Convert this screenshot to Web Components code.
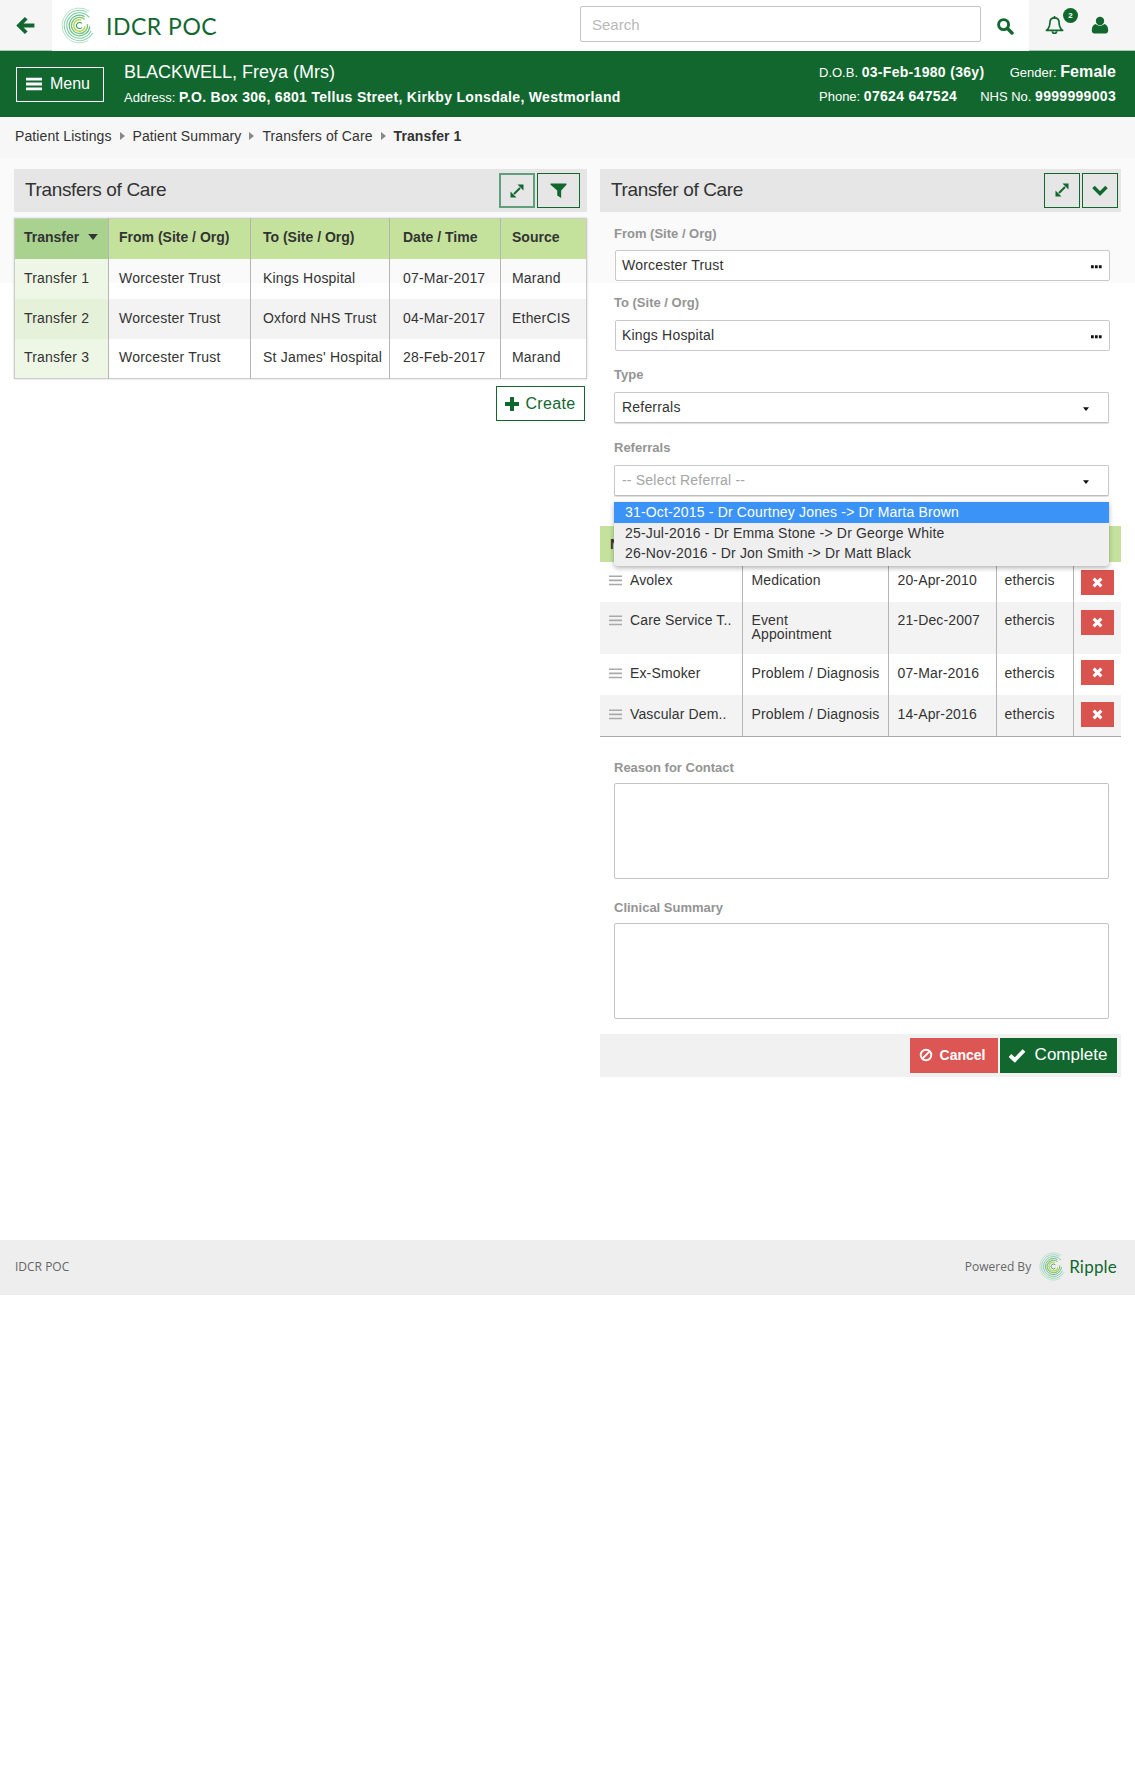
<!DOCTYPE html>
<html>
<head>
<meta charset="utf-8">
<title>IDCR POC</title>
<style>
  html, body { margin: 0; padding: 0; background: #fff; }
  body { font-family: "Liberation Sans", Arial, sans-serif; color: #333; font-size: 14px; }
</style>
</head>
<body>
<app-header></app-header>
<patient-banner></patient-banner>
<bread-crumbs></bread-crumbs>
<main-area>
  <div slot="left">
    <panel-heading>
      Transfers of Care
      <icon-btn slot="actions" icon="expand" w="36" focused></icon-btn>
      <icon-btn slot="actions" icon="filter" w="43"></icon-btn>
    </panel-heading>
    <transfers-table></transfers-table>
    <create-bar></create-bar>
  </div>
  <div slot="right">
    <panel-heading narrow>
      Transfer of Care
      <icon-btn slot="actions" icon="expand" w="36"></icon-btn>
      <icon-btn slot="actions" icon="chevron" w="36"></icon-btn>
    </panel-heading>
    <form-field label="From (Site / Org)" style="margin-top:14px" gap="8"><lookup-box value="Worcester Trust"></lookup-box></form-field>
    <form-field label="To (Site / Org)" style="margin-top:14px" gap="9"><lookup-box value="Kings Hospital"></lookup-box></form-field>
    <form-field label="Type" style="margin-top:16px" gap="9" flush><select-box value="Referrals"></select-box></form-field>
    <form-field label="Referrals" style="margin-top:17px" gap="9" flush>
      <select-box value="-- Select Referral --" placeholder></select-box>
      <referral-menu></referral-menu>
    </form-field>
    <items-table style="margin-top:30px"></items-table>
    <form-field label="Reason for Contact" style="margin-top:23px" gap="7" flush><text-box h="96"></text-box></form-field>
    <form-field label="Clinical Summary" style="margin-top:21px" gap="7" flush><text-box h="96"></text-box></form-field>
    <action-bar></action-bar>
  </div>
</main-area>
<app-footer></app-footer>

<script>
const ICONS = {
  back: '<svg viewBox="0 0 20 20" width="21" height="21"><path d="M9.400 1.800 12 4.400 8.200 8.100H18.500v3.800H8.200L12 15.600l-2.600 2.600L1.200 10z" fill="currentColor"/></svg>',
  search: '<svg viewBox="0 0 18 18" width="18" height="18"><circle cx="7.600" cy="7.600" r="5" fill="none" stroke="currentColor" stroke-width="2.900"/><path d="M11.400 11.400 16 16" stroke="currentColor" stroke-width="3.400" stroke-linecap="round"/></svg>',
  bell: '<svg viewBox="0 0 20 20" width="21" height="21"><path d="M10 2.800c-2.900 0-4.400 2.100-4.400 4.800 0 3.800-1.400 5.500-3.300 7.100h15.400c-1.900-1.600-3.300-3.300-3.300-7.100 0-2.700-1.500-4.800-4.400-4.800z" fill="none" stroke="currentColor" stroke-width="1.600" stroke-linejoin="round"/><path d="M10 1v2M8 15.400a2 2 0 0 0 4 0" fill="none" stroke="currentColor" stroke-width="1.600"/></svg>',
  user: '<svg viewBox="0 0 18 18" width="18" height="18"><circle cx="9" cy="5" r="4.200" fill="currentColor"/><path d="M.8 14.500c0-3.800 1.500-6 3.800-6.500C6 9.200 7.400 9.800 9 9.800s3-.6 4.400-1.800c2.300.5 3.800 2.700 3.800 6.500 0 1.900-1.100 3-2.800 3H3.600c-1.700 0-2.800-1.100-2.800-3z" fill="currentColor"/></svg>',
  bars: '<svg viewBox="0 0 16 14" width="16" height="14"><path d="M0 .8h16v2.800H0zM0 5.600h16v2.800H0zM0 10.400h16v2.800H0z" fill="currentColor"/></svg>',
  expand: '<svg viewBox="0 0 16 16" width="16" height="16"><path d="M8.500 1.500h6v6zM1.500 8.500v6h6z" fill="currentColor"/><path d="M11 5 5 11" stroke="currentColor" stroke-width="2"/></svg>',
  filter: '<svg viewBox="0 0 16 16" width="17" height="17"><path d="M.5 1.500h15v1.200L10.500 8V15L6.800 12.800V8L.5 2.700z" fill="currentColor"/></svg>',
  chevron: '<svg viewBox="0 0 18 18" width="18" height="18"><path d="M2.500 6 9 12.500 15.500 6" fill="none" stroke="currentColor" stroke-width="3.400"/></svg>',
  plus: '<svg viewBox="0 0 14 14" width="14" height="14"><path d="M5 0h4v5h5v4H9v5H5V9H0V5h5z" fill="currentColor"/></svg>',
  times: '<svg viewBox="0 0 12 12" width="11" height="11"><path d="M1.800 1.800l8.400 8.400M10.200 1.800l-8.400 8.400" stroke="currentColor" stroke-width="3.400"/></svg>',
  ban: '<svg viewBox="0 0 14 14" width="14" height="14"><circle cx="7" cy="7" r="5.300" fill="none" stroke="currentColor" stroke-width="1.900"/><path d="M3.400 10.600 10.600 3.400" stroke="currentColor" stroke-width="1.900"/></svg>',
  check: '<svg viewBox="0 0 18 16" width="18" height="16"><path d="M2 8.500 6.800 13 16 3.500" fill="none" stroke="currentColor" stroke-width="3.800"/></svg>',
  dots: '<svg viewBox="0 0 12 4" width="11" height="4"><path d="M0 0h3v3.400H0zM4.300 0h3v3.400h-3zM8.600 0h3v3.400h-3z" fill="#111"/></svg>',
  caret: '<svg viewBox="0 0 8 5" width="6" height="4"><path d="M0 0h8L4 5z" fill="currentColor"/></svg>',
  handle: '<svg viewBox="0 0 14 11" width="13" height="11"><path d="M0 0h14v1.700H0zM0 4.500h14v1.700H0zM0 9h14v1.700H0z" fill="#a9a9a9"/></svg>'
};

// ring from angle a to angle b (degrees, clockwise from east) around the logo centre
function ring(r, a, b, color, w) {
  const p = d => [18 + r * Math.cos(d * Math.PI / 180), 18 + r * Math.sin(d * Math.PI / 180)].map(n => n.toFixed(2)).join(' ');
  const large = (b - a) > 180 ? 1 : 0;
  return `<path d="M${p(a)}A${r} ${r} 0 ${large} 1 ${p(b)}" stroke="${color}" stroke-width="${w}"/>`;
}

class RippleLogo extends HTMLElement {
  connectedCallback() {
    const s = this.getAttribute('size') || 36;
    this.attachShadow({mode: 'open'}).innerHTML = `
      <style>:host { display: inline-flex; width: ${s}px; height: ${s}px; }</style>
      <svg viewBox="0 0 36 36" width="${s}" height="${s}" fill="none">
        ${ring(17, 60, 305, '#a5dcc0', .8)}
        ${ring(14.8, 30, 300, '#8fd3b0', 1)}
        ${ring(12.4, 25, 320, '#7cc9a0', 1.100)}
        ${ring(10, 5, 300, '#62bd8c', 1.200)}
        ${ring(7.800, -10, 310, '#7cc472', 1.300)}
        ${ring(5.600, 10, 290, '#b3d54d', 1.400)}
        ${ring(3, 40, 320, '#2f9a5c', 1)}
      </svg>`;
  }
}
customElements.define('ripple-logo', RippleLogo);

class AppHeader extends HTMLElement {
  connectedCallback() {
    this.attachShadow({mode: 'open'}).innerHTML = `
      <style>
        :host { display: flex; height: 51px; align-items: stretch; background: #fff; color: #12672f; font-family: "Liberation Sans", Arial, sans-serif; }
        .back { width: 52px; background: #f5f5f5; border-bottom: 1px solid #a9c9b5; box-sizing: border-box; display: flex; align-items: center; justify-content: center; padding-right: 1px; }
        .brand { display: flex; align-items: center; margin-left: 9px; gap: 8px; flex: 1; }
        .name { font: 400 23px Lato, "Liberation Sans", sans-serif; letter-spacing: .5px; }
        .search { width: 401px; height: 36px; margin-top: 6px; box-sizing: border-box; border: 1px solid #c4c4c4; border-radius: 2px; padding: 0 11px; display: flex; align-items: center; color: #b9b9b9; font-size: 15px; }
        .find { width: 48px; display: flex; align-items: center; justify-content: center; padding-top: 1px; box-sizing: border-box; }
        .tools { width: 106px; background: #f5f5f5; border-bottom: 1px solid #a9c9b5; box-sizing: border-box; display: flex; align-items: center; position: relative; }
        .bell { margin-left: 15px; display: flex; }
        .user { margin-left: 26px; display: flex; }
        .badge { position: absolute; left: 34px; top: 8px; width: 15px; height: 15px; border-radius: 50%; background: #12672f; color: #fff; font-size: 8px; font-weight: 700; text-align: center; line-height: 15px; }
      </style>
      <div class="back">${ICONS.back}</div>
      <div class="brand"><ripple-logo size="37"></ripple-logo><span class="name">IDCR POC</span></div>
      <div class="search">Search</div>
      <div class="find">${ICONS.search}</div>
      <div class="tools"><span class="bell">${ICONS.bell}</span><span class="badge">2</span><span class="user">${ICONS.user}</span></div>`;
  }
}
customElements.define('app-header', AppHeader);

class PatientBanner extends HTMLElement {
  connectedCallback() {
    this.attachShadow({mode: 'open'}).innerHTML = `
      <style>
        :host { display: flex; height: 66px; background: #12672f; color: #fff; align-items: center; padding: 0 19px 0 16px; box-sizing: border-box; font-size: 13px; }
        .menu { width: 88px; height: 35px; box-sizing: border-box; border: 1px solid #fff; display: flex; align-items: center; justify-content: center; gap: 8px; font-size: 16px; padding-right: 4px; }
        .who { margin-left: 20px; flex: 1; display: flex; flex-direction: column; gap: 6px; padding-top: 1px; }
        .name { font-size: 18px; line-height: 20px; }
        .line { line-height: 18px; }
        b { font-size: 14px; font-weight: 700; letter-spacing: .31px; }
        .meta { width: 297px; display: flex; flex-direction: column; gap: 5px; }
        .row { display: flex; justify-content: space-between; white-space: nowrap; }
        .g { font-size: 16px; letter-spacing: .1px; }
      </style>
      <div class="menu">${ICONS.bars}<span>Menu</span></div>
      <div class="who">
        <div class="name">BLACKWELL, Freya (Mrs)</div>
        <div class="line">Address: <b>P.O. Box 306, 6801 Tellus Street, Kirkby Lonsdale, Westmorland</b></div>
      </div>
      <div class="meta">
        <div class="row line"><span>D.O.B. <b>03-Feb-1980 (36y)</b></span><span>Gender: <b class="g">Female</b></span></div>
        <div class="row line"><span>Phone: <b>07624 647524</b></span><span>NHS No. <b>9999999003</b></span></div>
      </div>`;
  }
}
customElements.define('patient-banner', PatientBanner);

class BreadCrumbs extends HTMLElement {
  connectedCallback() {
    const tri = '<svg viewBox="0 0 5 8" width="5" height="8"><path d="M0 0l5 4-5 4z" fill="#888"/></svg>';
    this.attachShadow({mode: 'open'}).innerHTML = `
      <style>
        :host { display: flex; height: 41px; background: #f7f7f7; align-items: center; padding: 0 0 3px 15px; box-sizing: border-box; gap: 8px; font-size: 14px; color: #333; letter-spacing: .1px; }
        b { font-weight: 700; }
      </style>
      <span>Patient Listings</span>${tri}<span>Patient Summary</span>${tri}<span>Transfers of Care</span>${tri}<b>Transfer 1</b>`;
  }
}
customElements.define('bread-crumbs', BreadCrumbs);

class MainArea extends HTMLElement {
  connectedCallback() {
    this.attachShadow({mode: 'open'}).innerHTML = `
      <style>
        :host { display: grid; grid-template-columns: 573px 521px; column-gap: 13px; padding: 11px 14px 0; height: 1082px; box-sizing: border-box;
          background: linear-gradient(#fafafa 0, #fafafa 125px, #fff 125px); }
      </style>
      <slot name="left"></slot><slot name="right"></slot>`;
  }
}
customElements.define('main-area', MainArea);

class PanelHeading extends HTMLElement {
  connectedCallback() {
    const narrow = this.hasAttribute('narrow');
    this.attachShadow({mode: 'open'}).innerHTML = `
      <style>
        :host { display: flex; height: 43px; background: #e6e6e6; align-items: center; padding-left: 11px; font-size: 19px; color: #333; letter-spacing: -.35px; }
        .t { flex: 1; padding-bottom: 2px; }
        .a { display: flex; gap: 2px; padding-right: ${narrow ? 3 : 7}px; margin-top: ${narrow ? -1 : 0}px; }
      </style>
      <div class="t"><slot></slot></div>
      <div class="a"><slot name="actions"></slot></div>`;
  }
}
customElements.define('panel-heading', PanelHeading);

class IconBtn extends HTMLElement {
  connectedCallback() {
    const focused = this.hasAttribute('focused');
    this.attachShadow({mode: 'open'}).innerHTML = `
      <style>
        :host { display: flex; width: ${this.getAttribute('w')}px; height: 35px; box-sizing: border-box; border: ${focused ? '2px solid #5f9f7b' : '1px solid #12672f'}; align-items: center; justify-content: center; color: #12672f; }
      </style>${ICONS[this.getAttribute('icon')]}`;
  }
}
customElements.define('icon-btn', IconBtn);

class TransfersTable extends HTMLElement {
  connectedCallback() {
    const rows = [
      ['Transfer 1', 'Worcester Trust', 'Kings Hospital', '07-Mar-2017', 'Marand'],
      ['Transfer 2', 'Worcester Trust', 'Oxford NHS Trust', '04-Mar-2017', 'EtherCIS'],
      ['Transfer 3', 'Worcester Trust', "St James' Hospital", '28-Feb-2017', 'Marand']
    ];
    this.attachShadow({mode: 'open'}).innerHTML = `
      <style>
        :host { display: block; margin-top: 6px; }
        table { width: 573px; border-collapse: collapse; table-layout: fixed; font-size: 14px; border: 1px solid #ccc; box-shadow: 0 0 2px #ccc; }
        th { height: 40px; box-sizing: border-box; background: #c5e29d; text-align: left; font-weight: 700; padding: 0 0 4px; border-left: 1px solid #b5b5b5; }
        td { height: 40px; box-sizing: border-box; padding: 0 0 2px; border-left: 1px solid #b5b5b5; letter-spacing: .2px; }
        th:first-child, td:first-child { border-left: 0; padding-left: 9px; }
        th:nth-child(2), td:nth-child(2) { padding-left: 10px; }
        th:nth-child(3), td:nth-child(3) { padding-left: 12px; }
        th:nth-child(4), td:nth-child(4) { padding-left: 13px; }
        th:nth-child(5), td:nth-child(5) { padding-left: 11px; }
        th:first-child { background: #a9d28f; }
        td:first-child { background: #eef7e6; }
        tbody tr:nth-child(2) td { background: #f3f3f3; }
        tbody tr:nth-child(2) td:first-child { background: #e6f1da; }
        .c { display: inline-flex; margin-left: 9px; vertical-align: 2px; width: 10px; }
        .c svg { width: 10px; height: 6px; }
      </style>
      <table>
        <colgroup><col style="width:94px"><col style="width:142px"><col style="width:139px"><col style="width:111px"><col></colgroup>
        <thead><tr><th>Transfer<span class="c">${ICONS.caret}</span></th><th>From (Site / Org)</th><th>To (Site / Org)</th><th>Date / Time</th><th>Source</th></tr></thead>
        <tbody>${rows.map(r => `<tr>${r.map(c => `<td>${c}</td>`).join('')}</tr>`).join('')}</tbody>
      </table>`;
  }
}
customElements.define('transfers-table', TransfersTable);

class CreateBar extends HTMLElement {
  connectedCallback() {
    this.attachShadow({mode: 'open'}).innerHTML = `
      <style>
        :host { display: flex; justify-content: flex-end; margin-top: 7px; padding-right: 2px; }
        .b { width: 89px; height: 35px; box-sizing: border-box; border: 1px solid #12672f; color: #12672f; display: flex; align-items: center; justify-content: center; gap: 6px; font-size: 16px; letter-spacing: .35px; }
      </style>
      <div class="b">${ICONS.plus}<span>Create</span></div>`;
  }
}
customElements.define('create-bar', CreateBar);

class FormField extends HTMLElement {
  connectedCallback() {
    const flush = this.hasAttribute('flush');
    this.attachShadow({mode: 'open'}).innerHTML = `
      <style>
        :host { display: block; position: relative; padding: 0 ${flush ? 12 : 11}px 0 ${flush ? 14 : 15}px; }
        label { display: block; height: 16px; line-height: 16px; margin-bottom: ${this.getAttribute('gap')}px; margin-left: ${flush ? 0 : -1}px; color: #949494; font-size: 13px; font-weight: 700; }
        .w { position: relative; }
      </style>
      <label>${this.getAttribute('label')}</label>
      <div class="w"><slot></slot></div>`;
  }
}
customElements.define('form-field', FormField);

class LookupBox extends HTMLElement {
  connectedCallback() {
    this.attachShadow({mode: 'open'}).innerHTML = `
      <style>
        :host { display: flex; height: 31px; box-sizing: border-box; border: 1px solid #c9c9c9; border-radius: 2px; background: #fff; align-items: center; padding: 0 7px 2px 6px; font-size: 14px; color: #333; justify-content: space-between; letter-spacing: .2px; }
        svg { margin-top: 5px; }
      </style>
      <span>${this.getAttribute('value')}</span>${ICONS.dots}`;
  }
}
customElements.define('lookup-box', LookupBox);

class SelectBox extends HTMLElement {
  connectedCallback() {
    const ph = this.hasAttribute('placeholder');
    this.attachShadow({mode: 'open'}).innerHTML = `
      <style>
        :host { display: flex; height: 31px; box-sizing: border-box; border: 1px solid #c9c9c9; border-bottom-color: #bdbdbd; border-radius: 2px; background: #fff; align-items: center; padding: 0 19px 2px 7px; font-size: 14px; color: ${ph ? '#a5a5a5' : '#333'}; justify-content: space-between; box-shadow: 0 1px 1px #ddd; letter-spacing: .2px; }
        svg { color: #111; margin-top: 4px; }
      </style>
      <span>${this.getAttribute('value')}</span>${ICONS.caret}`;
  }
}
customElements.define('select-box', SelectBox);

class ReferralMenu extends HTMLElement {
  connectedCallback() {
    this.attachShadow({mode: 'open'}).innerHTML = `
      <style>
        :host { position: absolute; left: 0; right: 0; top: 37px; background: #efefef; box-shadow: 0 2px 5px rgba(0,0,0,.3); border-radius: 0 0 4px 4px; padding-bottom: 2px; font-size: 14px; color: #333; z-index: 5; letter-spacing: .17px; }
        div { height: 20.500px; line-height: 20.500px; padding-left: 11px; white-space: nowrap; }
        .on { background: #3b93f7; color: #fff; }
      </style>
      <div class="on">31-Oct-2015 - Dr Courtney Jones -&gt; Dr Marta Brown</div>
      <div>25-Jul-2016 - Dr Emma Stone -&gt; Dr George White</div>
      <div>26-Nov-2016 - Dr Jon Smith -&gt; Dr Matt Black</div>`;
  }
}
customElements.define('referral-menu', ReferralMenu);

class ItemsTable extends HTMLElement {
  connectedCallback() {
    const rows = [
      ['Avolex', 'Medication', '20-Apr-2010', 'ethercis', 40, 11, 8],
      ['Care Service T..', 'Event<br>Appointment', '21-Dec-2007', 'ethercis', 52, 11, 8],
      ['Ex-Smoker', 'Problem / Diagnosis', '07-Mar-2016', 'ethercis', 41, 12, 6],
      ['Vascular Dem..', 'Problem / Diagnosis', '14-Apr-2016', 'ethercis', 41, 12, 7]
    ];
    this.attachShadow({mode: 'open'}).innerHTML = `
      <style>
        :host { display: block; }
        table { width: 521px; border-collapse: collapse; table-layout: fixed; font-size: 14px; letter-spacing: .14px; }
        th { height: 36px; background: #c5e29d; text-align: left; font-weight: 700; padding: 0 0 0 10px; }
        td { padding: 0 0 0 9px; vertical-align: top; border-left: 1px solid #b5b5b5; line-height: 14px; box-sizing: border-box; }
        td:first-child { border-left: 0; white-space: nowrap; }
        td:nth-child(4) { padding-left: 8px; }
        td:last-child { padding-left: 7px; }
        tbody tr:nth-child(even) td { background: #f3f3f3; }
        tbody tr:last-child td { border-bottom: 1px solid #aaa; }
        .h { display: inline-block; width: 21px; vertical-align: -1px; }
        .x { width: 33px; height: 25px; background: #d9534f; color: #fff; display: flex; align-items: center; justify-content: center; }
      </style>
      <table>
        <colgroup><col style="width:142px"><col style="width:146px"><col style="width:108px"><col style="width:77px"><col></colgroup>
        <thead><tr><th colspan="5">N</th></tr></thead>
        <tbody>${rows.map(r => `<tr style="height:${r[4]}px"><td style="padding-top:${r[5]}px"><span class="h">${ICONS.handle}</span>${r[0]}</td><td style="padding-top:${r[5]}px">${r[1]}</td><td style="padding-top:${r[5]}px">${r[2]}</td><td style="padding-top:${r[5]}px">${r[3]}</td><td style="padding-top:${r[6]}px"><div class="x">${ICONS.times}</div></td></tr>`).join('')}</tbody>
      </table>`;
  }
}
customElements.define('items-table', ItemsTable);

class TextBox extends HTMLElement {
  connectedCallback() {
    this.attachShadow({mode: 'open'}).innerHTML = `
      <style>
        :host { display: block; height: ${this.getAttribute('h')}px; box-sizing: border-box; border: 1px solid #c4c4c4; border-radius: 2px; background: #fff; }
      </style>`;
  }
}
customElements.define('text-box', TextBox);

class ActionBar extends HTMLElement {
  connectedCallback() {
    this.attachShadow({mode: 'open'}).innerHTML = `
      <style>
        :host { display: flex; justify-content: flex-end; align-items: center; height: 43px; margin-top: 15px; background: #f1f1f1; padding-right: 4px; gap: 2px; color: #fff; }
        .b { height: 35px; display: flex; align-items: center; justify-content: center; box-sizing: border-box; }
        .c { width: 88px; background: #dc5654; gap: 7px; font-size: 14px; font-weight: 700; padding-right: 4px; }
        .k { width: 117px; background: #12672f; gap: 9px; font-size: 17px; padding-right: 2px; }
      </style>
      <div class="b c">${ICONS.ban}<span>Cancel</span></div>
      <div class="b k">${ICONS.check}<span>Complete</span></div>`;
  }
}
customElements.define('action-bar', ActionBar);

class AppFooter extends HTMLElement {
  connectedCallback() {
    this.attachShadow({mode: 'open'}).innerHTML = `
      <style>
        :host { display: flex; height: 55px; background: #eee; align-items: center; justify-content: space-between; padding: 0 18px 2px 15px; box-sizing: border-box; color: #666; font: 12px "Open Sans", sans-serif; }
        .r { display: flex; align-items: center; }
        .p { margin-right: 8px; }
        .n { margin-left: 1px; color: #12672f; font: 17px Lato, sans-serif; letter-spacing: .2px; }
      </style>
      <span>IDCR POC</span>
      <div class="r"><span class="p">Powered By</span><ripple-logo size="29"></ripple-logo><span class="n">Ripple</span></div>`;
  }
}
customElements.define('app-footer', AppFooter);
</script>
</body>
</html>
